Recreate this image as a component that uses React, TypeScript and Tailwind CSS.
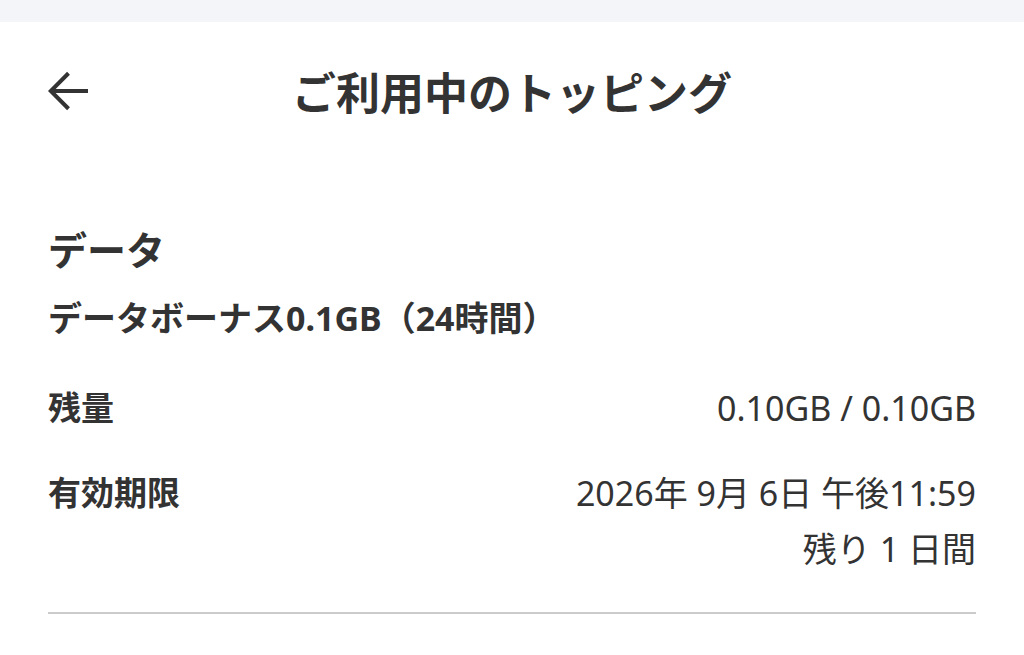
import React from "react";

export default function App() {
  return (
    <div
      className="w-[1024px] h-[655px] bg-white overflow-hidden text-[#333333]"
      style={{ fontFamily: '"Noto Sans", "Noto Sans CJK JP", sans-serif' }}
    >
      <div className="h-[22px] bg-[#f4f5f9]" />
      <header className="h-[142px] flex items-center px-[48px]">
        <div className="w-[40px] h-[40px] mb-[4px] shrink-0">
          <svg width="40" height="40" viewBox="4 4 16 16" fill="none" stroke="#333333" strokeWidth="1.6">
            <path d="M20 12H5.4M12.2 4.9L5.1 12l7.1 7.1" />
          </svg>
        </div>
        <h1 className="flex-1 text-center text-[44px] font-bold leading-[56px]">
          ご利用中のトッピング
        </h1>
        <div className="w-[40px] shrink-0" />
      </header>
      <main className="px-[48px]">
        <h2 className="mt-[62px] text-[39px] font-bold leading-[48px]">データ</h2>
        <p className="mt-[20px] text-[34px] font-bold leading-[48px]">
          データボーナス0.1GB（24時間）
        </p>
        <div className="mt-[38px] flex justify-between items-start leading-[56px]">
          <span className="text-[33px] font-bold">残量</span>
          <span className="text-[34px]">0.10GB / 0.10GB</span>
        </div>
        <div className="mt-[29px] flex justify-between items-start leading-[56px]">
          <span className="text-[33px] font-bold">有効期限</span>
          <div className="text-right text-[34px]">
            <div>2026年 9月 6日 午後11:59</div>
            <div>残り 1 日間</div>
          </div>
        </div>
        <div className="mt-[35px] h-[2px] bg-[#cbcbcb]" />
      </main>
    </div>
  );
}
